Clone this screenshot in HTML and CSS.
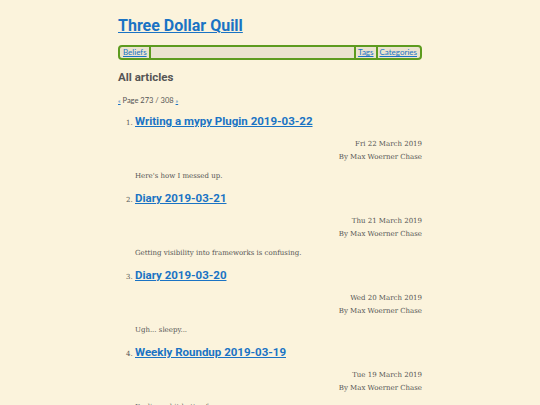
FILE: index.html
```html
<!DOCTYPE html>
<html>
<head>
<meta charset="utf-8">
<link rel="stylesheet" href="styles.css">
</head>
<body>
<div class="page">
  <h1 class="site-title"><a href="#">Three Dollar Quill</a></h1>
  <nav class="menu">
    <a class="menu-item sep-right" href="#">Beliefs</a>
    <span class="menu-fill"></span>
    <a class="menu-item sep-left sep-right" href="#">Tags</a>
    <a class="menu-item" href="#">Categories</a>
  </nav>
  <h2 class="section-title">All articles</h2>
  <p class="pager"><a href="#">«</a> Page 273 / 308 <a href="#">»</a></p>
  <ol class="articles">
    <li class="article">
      <h3 class="article-title"><a href="#">Writing a mypy Plugin 2019-03-22</a></h3>
      <div class="meta">
        <div>Fri 22 March 2019</div>
        <div>By Max Woerner Chase</div>
      </div>
      <p class="summary">Here's how I messed up.</p>
    </li>
    <li class="article">
      <h3 class="article-title"><a href="#">Diary 2019-03-21</a></h3>
      <div class="meta">
        <div>Thu 21 March 2019</div>
        <div>By Max Woerner Chase</div>
      </div>
      <p class="summary">Getting visibility into frameworks is confusing.</p>
    </li>
    <li class="article">
      <h3 class="article-title"><a href="#">Diary 2019-03-20</a></h3>
      <div class="meta">
        <div>Wed 20 March 2019</div>
        <div>By Max Woerner Chase</div>
      </div>
      <p class="summary">Ugh... sleepy...</p>
    </li>
    <li class="article">
      <h3 class="article-title"><a href="#">Weekly Roundup 2019-03-19</a></h3>
      <div class="meta">
        <div>Tue 19 March 2019</div>
        <div>By Max Woerner Chase</div>
      </div>
      <p class="summary">Feeling a bit better for sure.</p>
    </li>
  </ol>
</div>
</body>
</html>
```
FILE: styles.css
```css
html, body {
  margin: 0;
  padding: 0;
  background: #fbf3dc;
}
body {
  font-family: "DejaVu Serif", serif;
  color: #555;
}
.page {
  width: 304px;
  margin: 0 auto;
  padding-top: 15px;
}
a {
  color: #1a73c4;
}
.site-title {
  font-family: "Roboto", sans-serif;
  font-weight: 700;
  font-size: 16px;
  line-height: 22px;
  margin: 0 0 8px 0;
}
.menu {
  display: flex;
  align-items: stretch;
  height: 11px;
  border: 2px solid #5d9b1f;
  border-radius: 4px;
  background: #ebe3cf;
  padding: 0 1px;
  font-family: "Lato", sans-serif;
  font-size: 8px;
  line-height: 11px;
}
.menu-item {
  padding: 0 2px;
}
.menu-fill {
  flex: 1;
}
.sep-right { border-right: 2px solid #5d9b1f; }
.sep-left { border-left: 2px solid #5d9b1f; }
.section-title {
  font-family: "Roboto", sans-serif;
  font-weight: 700;
  font-size: 11.5px;
  line-height: 16px;
  color: #555;
  margin: 9px 0 0 0;
}
.pager {
  font-family: "Lato", sans-serif;
  font-size: 7.5px;
  line-height: 10px;
  margin: 11px 0 0 0;
}
.pager a { font-size: 6px; }
.articles {
  margin: 7px 0 0 0;
  padding-left: 17px;
  font-size: 7px;
}
.article {
  margin: 0;
}
.article-title {
  font-family: "Roboto", sans-serif;
  font-weight: 700;
  font-size: 11.5px;
  line-height: 16px;
  margin: 0;
}
.meta {
  text-align: right;
  font-size: 7px;
  line-height: 13px;
  margin-top: 9px;
}
.summary {
  margin: 6px 0 0 0;
  font-size: 7px;
  line-height: 13px;
  padding-bottom: 7px;
}
```
